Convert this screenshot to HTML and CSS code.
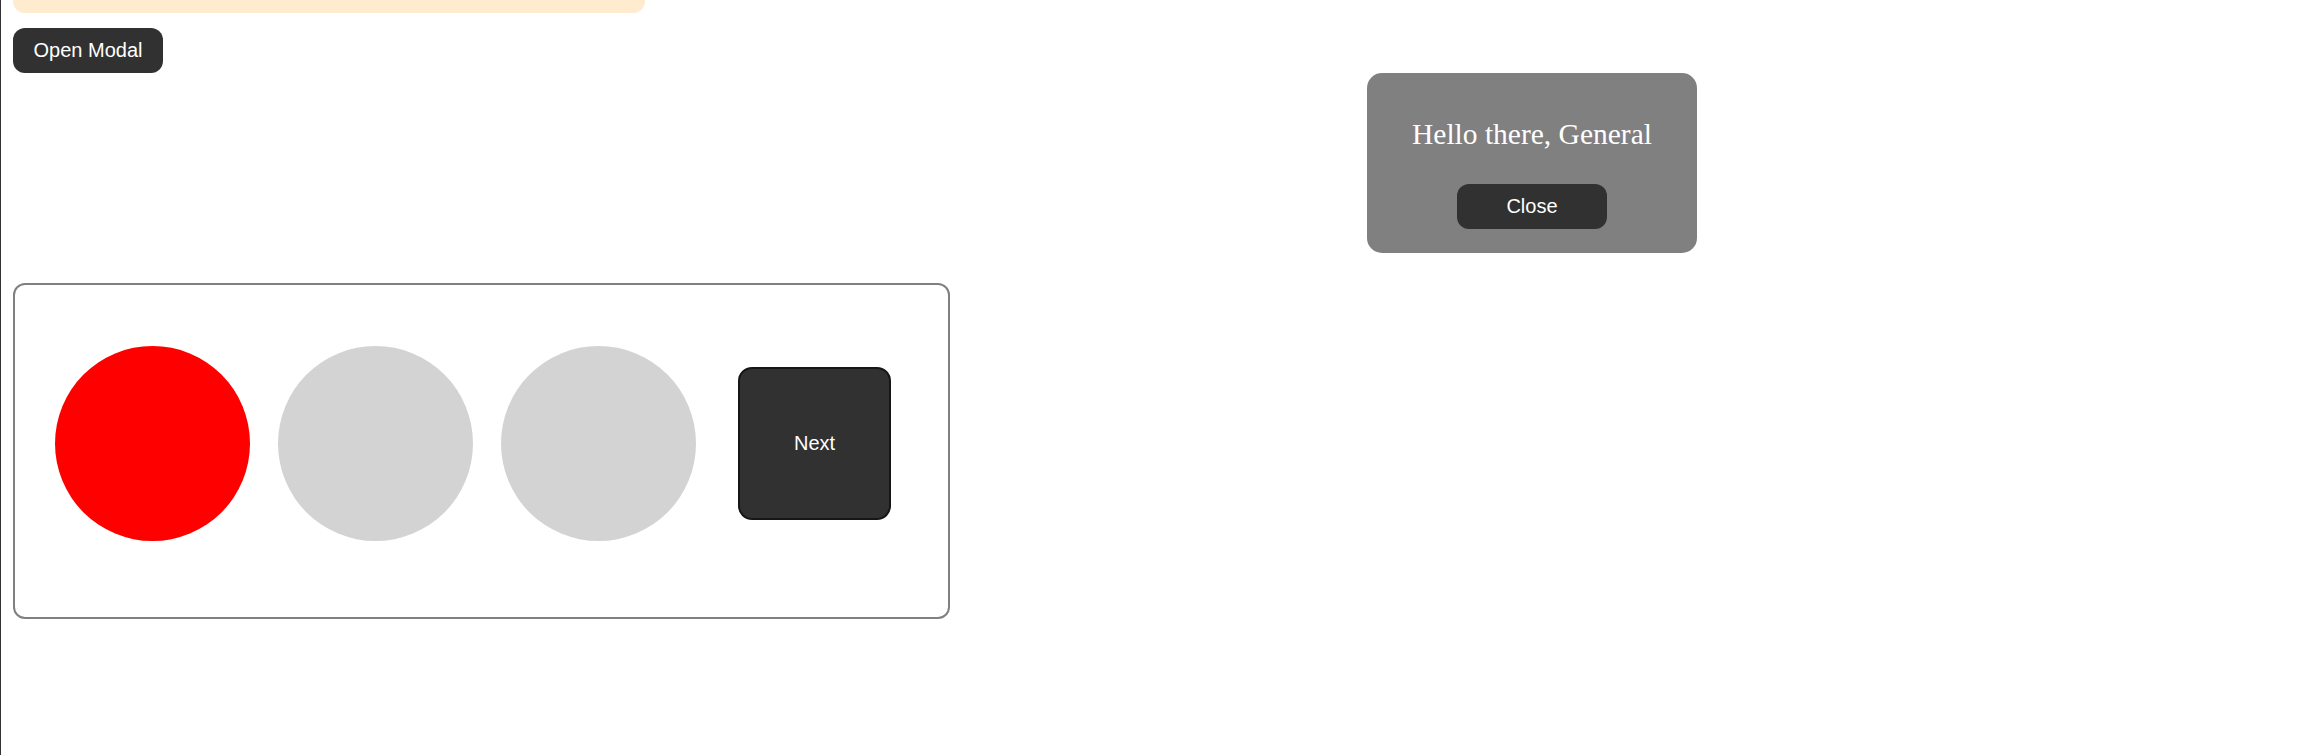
FILE: index.html
```html
<!DOCTYPE html>
<html>
<head>
<meta charset="utf-8">
<title>Stepper</title>
<link rel="stylesheet" href="styles.css">
</head>
<body>
<div class="page">
  <div class="banner"></div>
  <button class="btn open-btn">Open Modal</button>
  <div class="stepper">
    <div class="dot dot-active"></div>
    <div class="dot"></div>
    <div class="dot"></div>
    <button class="next-btn">Next</button>
  </div>
</div>
<div class="modal">
  <p class="modal-text">Hello there, General</p>
  <button class="btn">Close</button>
</div>
</body>
</html>
```
FILE: styles.css
```css
html, body {
  margin: 0;
  padding: 0;
  background: #ffffff;
  height: 100%;
}

.page {
  box-sizing: border-box;
  min-height: 100%;
  border-left: 1px solid #333333;
  padding-left: 12px;
  display: flex;
  flex-direction: column;
  align-items: flex-start;
}

.banner {
  width: 632px;
  height: 13px;
  background: #ffebcd;
  border-radius: 0 0 12px 12px;
}

.btn {
  box-sizing: border-box;
  width: 150px;
  height: 45px;
  border: none;
  border-radius: 12px;
  background: #313131;
  color: #ffffff;
  font-family: "Liberation Sans", Arial, sans-serif;
  font-size: 20px;
  padding: 0;
  cursor: pointer;
}

.open-btn {
  margin-top: 15px;
}

.stepper {
  box-sizing: border-box;
  width: 937px;
  height: 336px;
  margin-top: 210px;
  border: 2px solid #808080;
  border-radius: 12px;
  display: flex;
  align-items: center;
  padding: 61px 0 76px 40px;
  gap: 28px;
}

.dot {
  width: 195px;
  height: 195px;
  border-radius: 50%;
  background: #d3d3d3;
  flex: none;
}

.dot-active {
  background: #ff0000;
}

.next-btn {
  box-sizing: border-box;
  flex: none;
  width: 153px;
  height: 153px;
  margin-left: 14px;
  border: 2px solid #161616;
  border-radius: 14px;
  background: #313131;
  color: #ffffff;
  font-family: "Liberation Sans", Arial, sans-serif;
  font-size: 20px;
  padding: 0;
}

.modal {
  position: absolute;
  left: 1367px;
  top: 73px;
  box-sizing: border-box;
  width: 330px;
  height: 180px;
  background: #808080;
  border-radius: 15px;
  padding-top: 44px;
  display: flex;
  flex-direction: column;
  align-items: center;
}

.modal-text {
  margin: 0 0 33px;
  font-family: "Liberation Serif", "Times New Roman", serif;
  font-size: 29.5px;
  line-height: 34px;
  color: #ffffff;
}
```
